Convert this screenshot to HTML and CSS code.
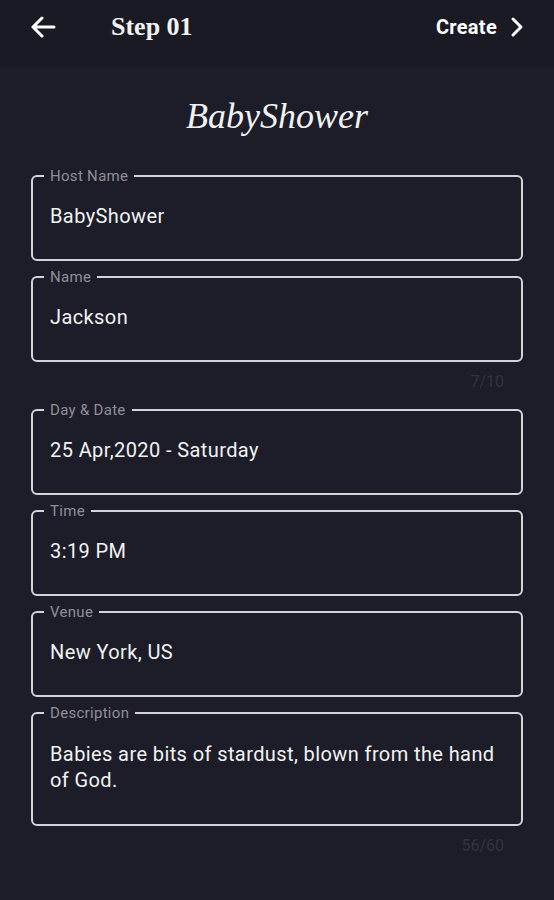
FILE: index.html
```html
<!DOCTYPE html>
<html lang="en">
<head>
  <meta charset="UTF-8">
  <title>Step 01</title>
  <link rel="stylesheet" href="styles.css">
</head>
<body>

<div id="top-bar">
  <div id="left-menu">
    <button class="icon-btn" aria-label="Back">
      <svg width="26" height="22" viewBox="0 0 26 22"><path d="M24 11H3M12 2L3 11l9 9" fill="none" stroke="#fff" stroke-width="3" stroke-linecap="round" stroke-linejoin="round"/></svg>
    </button>
    <span id="step-title">Step 01</span>
  </div>
  <button id="create-btn">Create
    <svg width="14" height="22" viewBox="0 0 14 22"><path d="M3 3l8 8-8 8" fill="none" stroke="#fff" stroke-width="3" stroke-linecap="round" stroke-linejoin="round"/></svg>
  </button>
</div>

<div id="content">
  <h1 id="event-title">BabyShower</h1>

  <fieldset class="field">
    <legend>Host Name</legend>
    <div class="value">BabyShower</div>
  </fieldset>

  <fieldset class="field">
    <legend>Name</legend>
    <div class="value">Jackson</div>
  </fieldset>
  <div class="counter">7/10</div>

  <fieldset class="field">
    <legend>Day &amp; Date</legend>
    <div class="value">25 Apr,2020 - Saturday</div>
  </fieldset>

  <fieldset class="field">
    <legend>Time</legend>
    <div class="value">3:19 PM</div>
  </fieldset>

  <fieldset class="field">
    <legend>Venue</legend>
    <div class="value">New York, US</div>
  </fieldset>

  <fieldset class="field">
    <legend>Description</legend>
    <div class="value multi">Babies are bits of stardust, blown from the hand of God.</div>
  </fieldset>
  <div class="counter">56/60</div>
</div>

</body>
</html>
```

FILE: styles.css
```css
body {
  margin: 0;
  background: #1c1d29;
  font-family: Roboto, "Liberation Sans", sans-serif;
  color: #f2f2f2;
}
#top-bar {
  display: flex;
  justify-content: space-between;
  align-items: center;
  height: 54px;
  padding: 0 30px 14px 30px;
  background: #191a24;
}
#left-menu {
  display: flex;
  align-items: center;
  gap: 55px;
}
.icon-btn, #create-btn {
  background: none;
  border: none;
  padding: 0;
  color: #fff;
  display: flex;
  align-items: center;
}
#step-title {
  font-family: "Liberation Serif", serif;
  font-weight: bold;
  font-size: 26px;
}
#create-btn {
  font-family: Roboto, "Liberation Sans", sans-serif;
  font-weight: bold;
  font-size: 20px;
  letter-spacing: 0.3px;
  gap: 13px;
}
#content {
  padding: 0 31px 40px 31px;
}
#event-title {
  margin: 28px 0 32px 0;
  text-align: center;
  font-family: "Liberation Serif", serif;
  font-style: italic;
  font-weight: normal;
  font-size: 36px;
  line-height: 40px;
}
.field {
  margin: 0 0 8px 0;
  padding: 20px 16px 31px 17px;
  border: 2px solid #d4d4d6;
  border-radius: 6px;
}
.field legend {
  margin-left: -6px;
  padding: 0 6px;
  font-size: 15px;
  line-height: 16px;
  letter-spacing: 0.3px;
  color: #8f9096;
}
.value {
  font-size: 20px;
  line-height: 24px;
  letter-spacing: 0.4px;
}
.value.multi {
  line-height: 26px;
}
.counter {
  margin: 12px 19px 12px 0;
  text-align: right;
  font-size: 16px;
  line-height: 16px;
  color: #33343f;
}
```
